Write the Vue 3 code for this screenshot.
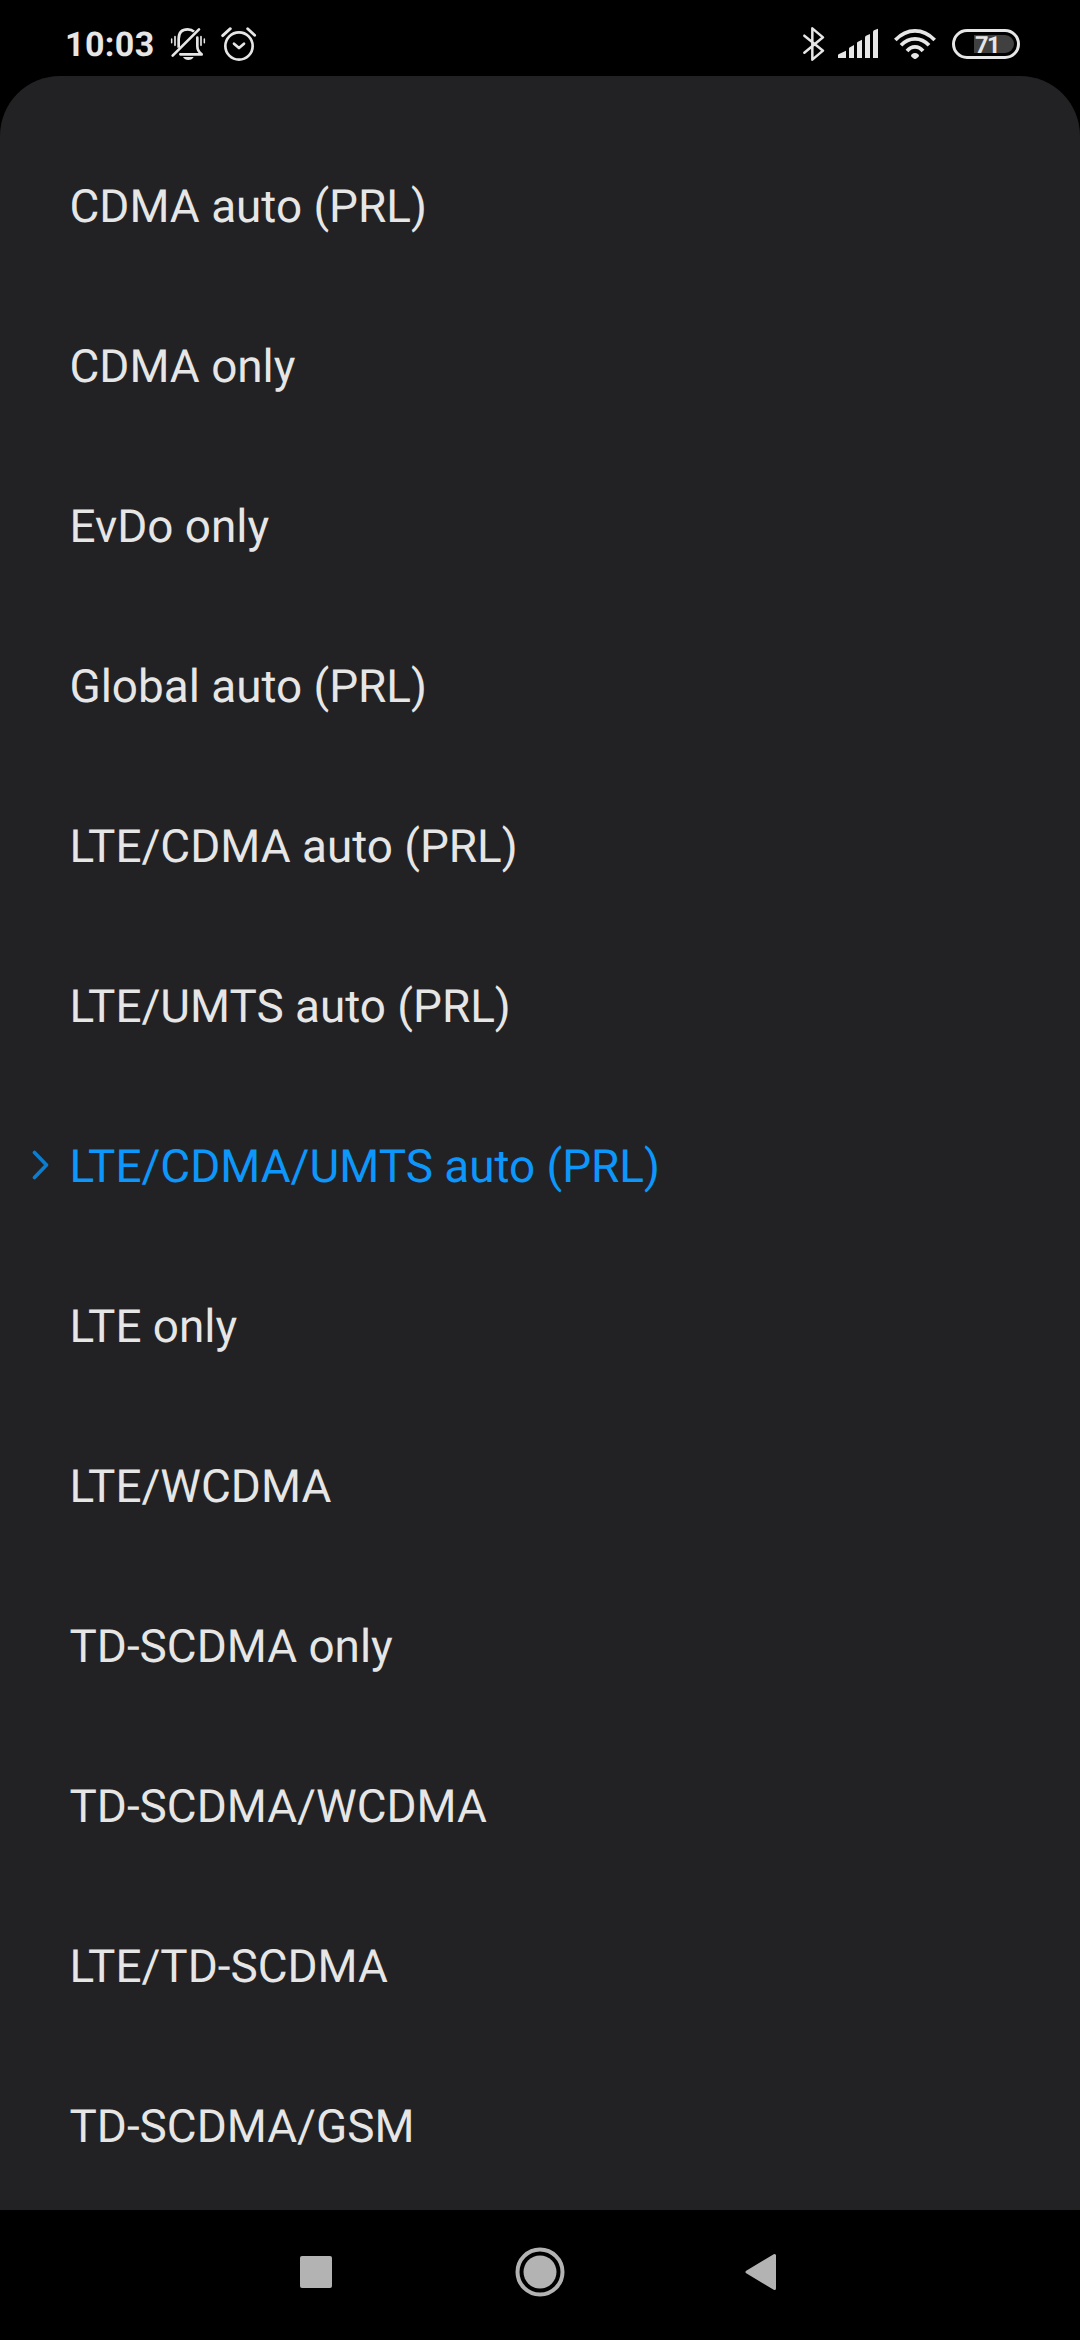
<script setup>
const selected = 6
const modes = [
  'CDMA auto (PRL)',
  'CDMA only',
  'EvDo only',
  'Global auto (PRL)',
  'LTE/CDMA auto (PRL)',
  'LTE/UMTS auto (PRL)',
  'LTE/CDMA/UMTS auto (PRL)',
  'LTE only',
  'LTE/WCDMA',
  'TD-SCDMA only',
  'TD-SCDMA/WCDMA',
  'LTE/TD-SCDMA',
  'TD-SCDMA/GSM',
]
</script>

<template>
  <div class="screen">
    <header class="status">
      <div class="group">
        <span class="clock">10:03</span>
        <svg class="bell" width="36" height="60" viewBox="360 0 108 180">
          <g fill="none" stroke="#e6e6e6" stroke-linecap="round" stroke-linejoin="round">
            <path d="M386 98V72C386 52 397 43 413 43C420 43 427 45 432 50" stroke-width="8" stroke-linecap="butt" />
            <path d="M442 68V94C442 105 447 112 455 118H391" stroke-width="8" />
            <path d="M447 43L368 122" stroke-width="8" />
            <path d="M375 65V91M453 65V91" stroke-width="5" />
            <path d="M365 72V83M463 72V83" stroke-width="4.500" />
          </g>
          <path d="M399 126H431C428 132 422 135 415 135C408 135 402 132 399 126Z" fill="#e6e6e6" />
        </svg>
        <svg class="alarm" width="37" height="60" viewBox="510 0 111 180">
          <g fill="none" stroke="#e6e6e6" stroke-width="8" stroke-linecap="round" stroke-linejoin="round">
            <circle cx="567" cy="93" r="41" />
            <path d="M552 86L567 99L582 86" />
            <path d="M518 62L541 41M593 41L614 61" stroke-width="8.500" />
          </g>
        </svg>
      </div>
      <div class="group">
        <svg width="23" height="60" viewBox="36 0 69 180">
          <path d="M43 62L99 107L67 134V40L99 67L43 113" fill="none" stroke="#e6e6e6" stroke-width="7.500" stroke-linejoin="round" stroke-linecap="round" />
        </svg>
        <svg class="signal" width="42" height="60" viewBox="141 0 126 180">
          <g fill="#e6e6e6">
            <path d="M168 107V129H144V121Q144 118 147 117Z" />
            <path d="M192 90V129H177V101Q177 98 180 97Z" />
            <path d="M216 74V129H201V84Q201 81 204 80Z" />
            <path d="M240 57V129H225V68Q225 64 228 62Z" />
            <path d="M264 41V129H249V52Q249 48 252 46Z" />
          </g>
        </svg>
        <svg class="wifi" width="44" height="60" viewBox="309 0 132 180">
          <g fill="none" stroke="#e6e6e6" stroke-width="11">
            <path d="M316 75Q342 47.500 375 47.500Q408 47.500 434 75" />
            <path d="M333 91Q351 71.500 375 71.500Q399 71.500 417 91" />
            <path d="M351 108Q361 95.500 375 95.500Q389 95.500 399 108" />
          </g>
          <path d="M375 114C382 114 387 119 387 122C387 125 378 132 375 132C372 132 363 125 363 122C363 119 368 114 375 114Z" fill="#e6e6e6" />
        </svg>
        <svg class="battery" width="70" height="60" viewBox="483 0 210 180">
          <rect x="490.500" y="46.500" width="195" height="81" rx="40.500" fill="none" stroke="#e6e6e6" stroke-width="9" />
          <path d="M552 60H645A27 27 0 0 1 645 114H552Z" fill="#404040" />
          <text x="591" y="113" text-anchor="middle" class="level">71</text>
        </svg>
      </div>
    </header>

    <main class="sheet">
      <ul class="list">
        <li v-for="(mode, i) in modes" :key="mode" class="row" :class="{ active: i === selected }">
          <span class="marker">
            <svg v-if="i === selected" width="18" height="30" viewBox="0 0 18 30">
              <path d="M2.500 2.500L14.500 15L2.500 27.500" fill="none" stroke="#0d7dd0" stroke-width="3.600" stroke-linecap="round" stroke-linejoin="round" />
            </svg>
          </span>
          <span>{{ mode }}</span>
        </li>
      </ul>
    </main>

    <nav class="nav">
      <svg width="32" height="50" viewBox="0 0 32 50">
        <rect x="0" y="9" width="32" height="32" rx="2" fill="#b3b3b3" />
      </svg>
      <svg class="home" width="50" height="50" viewBox="0 0 50 50">
        <circle cx="25" cy="25" r="22.500" fill="none" stroke="#b3b3b3" stroke-width="4" />
        <circle cx="25" cy="25" r="16.500" fill="#b3b3b3" />
      </svg>
      <svg class="back" width="32" height="50" viewBox="0 0 32 50">
        <path d="M2 25L29.500 8.500V41.500Z" fill="#b3b3b3" stroke="#b3b3b3" stroke-width="3" stroke-linejoin="round" />
      </svg>
    </nav>
  </div>
</template>

<style>
body {
  margin: 0;
  background: #000;
}
</style>

<style scoped>
.screen {
  width: 1080px;
  height: 2340px;
  display: flex;
  flex-direction: column;
  overflow: hidden;
  background: #000;
  font-family: Roboto, "Liberation Sans", sans-serif;
  text-rendering: geometricPrecision;
}
.status {
  height: 76px;
  flex: none;
  box-sizing: border-box;
  padding: 15px 59px 0 65px;
  display: flex;
  justify-content: space-between;
}
.group {
  display: flex;
  align-items: flex-start;
}
svg {
  display: block;
  flex: none;
}
.clock {
  width: 105px;
  line-height: 60px;
  font-size: 34px;
  font-weight: 700;
  letter-spacing: 0.4px;
  color: #e6e6e6;
  white-space: nowrap;
}
.alarm {
  margin-left: 14px;
}
.signal {
  margin-left: 12px;
}
.wifi {
  margin-left: 14px;
}
.battery {
  margin-left: 14px;
}
.level {
  font-size: 71px;
  font-weight: 700;
  letter-spacing: -5px;
  fill: #e6e6e6;
}
.sheet {
  flex: 1;
  min-height: 0;
  overflow: hidden;
  background: #222224;
  border-radius: 60px 60px 0 0;
}
.list {
  list-style: none;
  margin: 0;
  padding: 51px 0 0;
}
.row {
  height: 160px;
  display: flex;
  align-items: center;
  font-size: 45.85px;
  line-height: 54px;
  color: #e6e6e6;
  white-space: nowrap;
}
.row.active {
  color: #0d97fa;
}
.marker {
  width: 37.5px;
  padding-left: 32px;
  flex: none;
}
.marker svg {
  position: relative;
  top: -2px;
}
.nav {
  height: 130px;
  flex: none;
  box-sizing: border-box;
  padding: 37px 303px 0 300px;
  display: flex;
  justify-content: space-between;
  align-items: flex-start;
}
.home {
  margin-left: 2px;
}
</style>
